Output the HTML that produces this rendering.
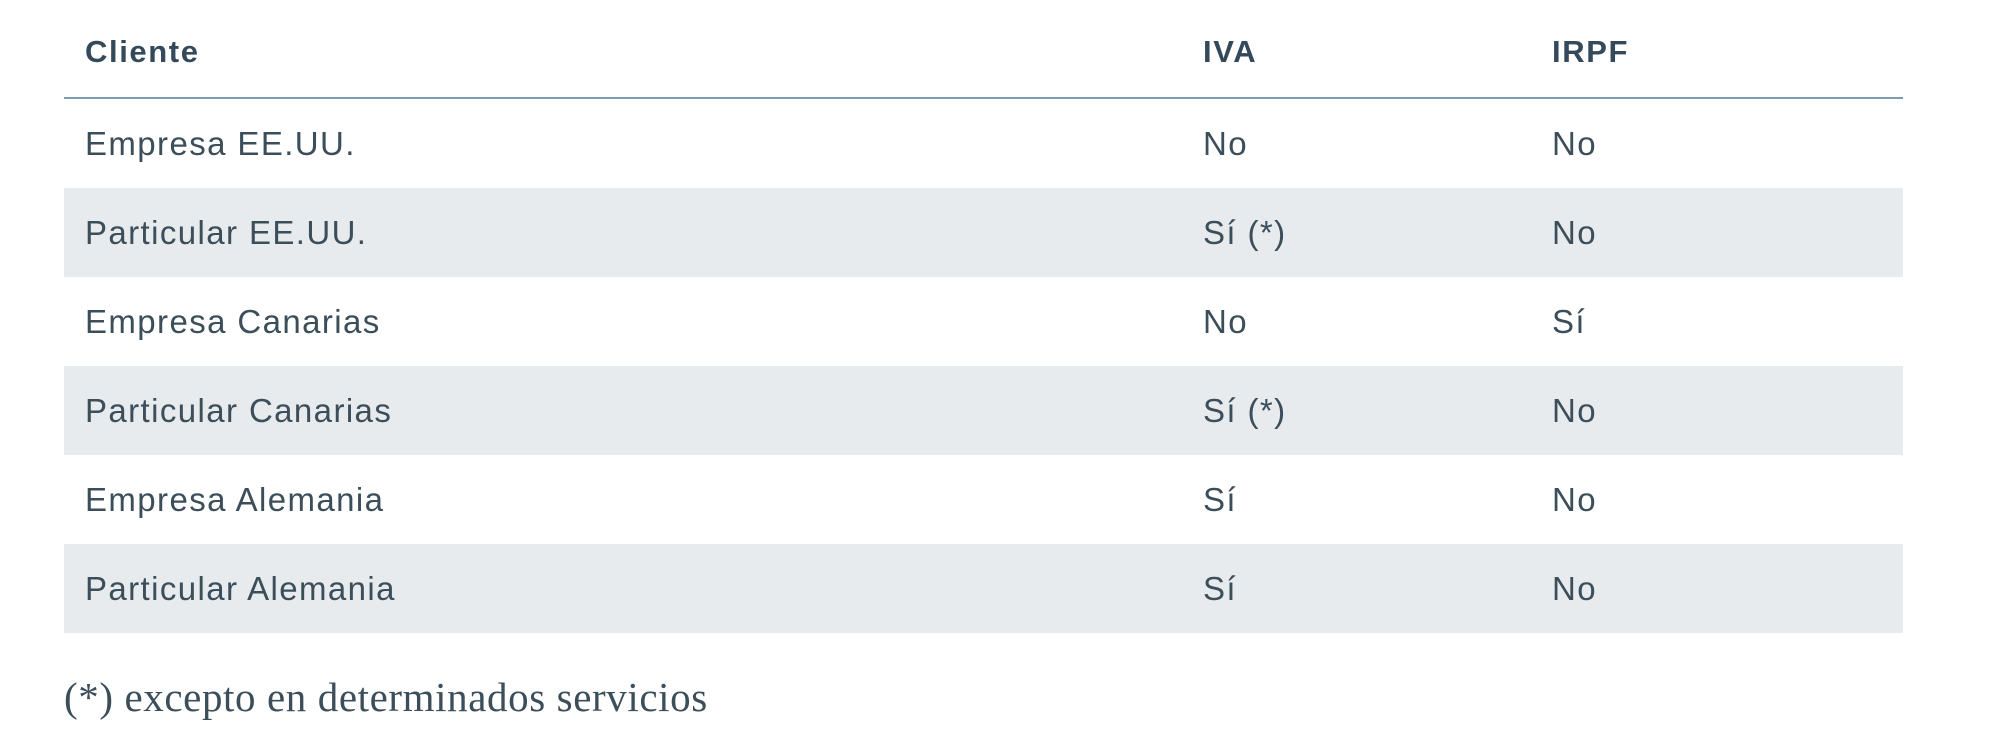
<!DOCTYPE html>
<html><head><meta charset="utf-8"><style>
html,body{margin:0;padding:0;background:#fff;width:2000px;height:747px;overflow:hidden}
body{font-family:"Liberation Sans",sans-serif;color:#3b4e5a}
.t{position:absolute;left:64px;width:1839px;top:0}
.h{height:97px;border-bottom:2px solid #7d9caf;position:relative}
.r{height:89px;position:relative}
.r.s{background:#e8ebee}
.c{position:absolute;top:50%;transform:translateY(-50%);font-size:33px;letter-spacing:1.4px;white-space:nowrap}
.h .c{font-weight:bold;font-size:31px;color:#34495a;top:52px;letter-spacing:1.6px}
.c1{left:21px}.c2{left:1139px}.c3{left:1488px}
.f{position:absolute;left:64px;top:673px;font-family:"Liberation Serif",serif;font-size:41px;letter-spacing:0.6px;color:#3b4e5a;white-space:nowrap}
</style></head><body>
<div class="t">
<div class="h"><span class="c c1">Cliente</span><span class="c c2">IVA</span><span class="c c3">IRPF</span></div>
<div class="r"><span class="c c1">Empresa EE.UU.</span><span class="c c2">No</span><span class="c c3">No</span></div>
<div class="r s"><span class="c c1">Particular EE.UU.</span><span class="c c2">Sí (*)</span><span class="c c3">No</span></div>
<div class="r"><span class="c c1">Empresa Canarias</span><span class="c c2">No</span><span class="c c3">Sí</span></div>
<div class="r s"><span class="c c1">Particular Canarias</span><span class="c c2">Sí (*)</span><span class="c c3">No</span></div>
<div class="r"><span class="c c1">Empresa Alemania</span><span class="c c2">Sí</span><span class="c c3">No</span></div>
<div class="r s"><span class="c c1">Particular Alemania</span><span class="c c2">Sí</span><span class="c c3">No</span></div>
</div>
<div class="f">(*) excepto en determinados servicios</div>
</body></html>
